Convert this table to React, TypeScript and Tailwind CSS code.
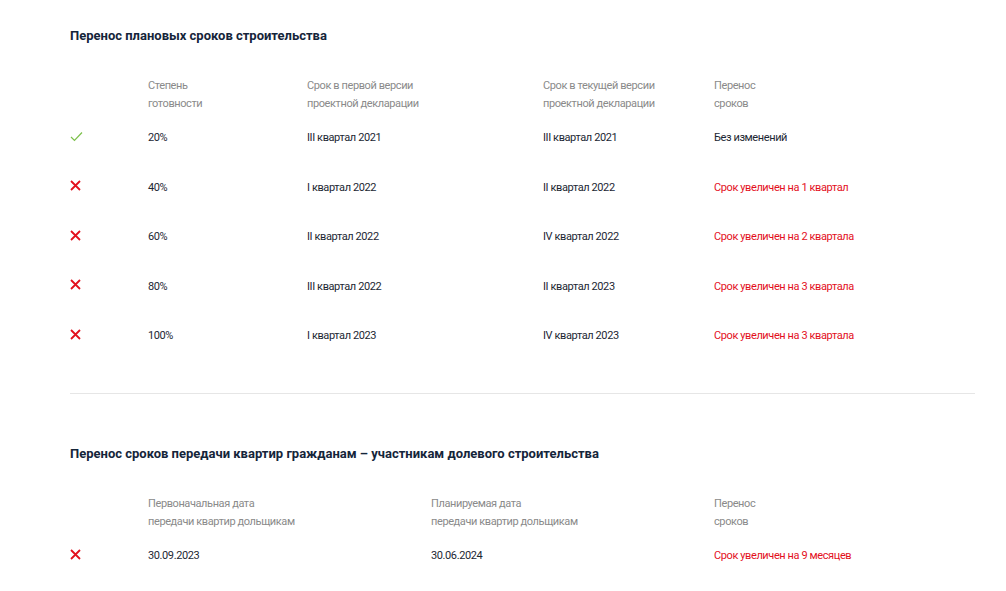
import * as React from 'react';

// ============================================
// Data
// ============================================

type Row = {
  ok: boolean;
  cells: string[];
  result: string;
};

const buildRows: Row[] = [
  { ok: true, cells: ['20%', 'III квартал 2021', 'III квартал 2021'], result: 'Без изменений' },
  { ok: false, cells: ['40%', 'I квартал 2022', 'II квартал 2022'], result: 'Срок увеличен на 1 квартал' },
  { ok: false, cells: ['60%', 'II квартал 2022', 'IV квартал 2022'], result: 'Срок увеличен на 2 квартала' },
  { ok: false, cells: ['80%', 'III квартал 2022', 'II квартал 2023'], result: 'Срок увеличен на 3 квартала' },
  { ok: false, cells: ['100%', 'I квартал 2023', 'IV квартал 2023'], result: 'Срок увеличен на 3 квартала' },
];

// ============================================
// Icons
// ============================================

function CheckIcon() {
  return (
    <svg width="13" height="11" viewBox="0 0 13 11" fill="none">
      <path d="M1 6l3.5 3.5L12 1.5" stroke="#7cc04b" strokeWidth="1.2" />
    </svg>
  );
}

function CrossIcon() {
  return (
    <svg width="11" height="11" viewBox="0 0 11 11" fill="none">
      <path d="M1 1l9 9M10 1l-9 9" stroke="#e3101d" strokeWidth="1.8" />
    </svg>
  );
}

function StatusIcon({ ok }: { ok: boolean }) {
  return (
    <div className="-mt-[2px] flex h-[18px] items-center">{ok ? <CheckIcon /> : <CrossIcon />}</div>
  );
}

// ============================================
// App
// ============================================

export default function App() {
  return (
    <div
      className="min-h-screen bg-white px-[70px] pt-[27px] text-[11px] tracking-[-0.4px] text-[#1c2733]"
      style={{ fontFamily: 'Roboto, "Liberation Sans", sans-serif' }}
    >
      <h2 className="text-[13px] font-bold leading-[18px] tracking-normal text-[#15253a]">
        Перенос плановых сроков строительства
      </h2>

      <div className="mt-[32px] grid grid-cols-[78px_159px_236px_171px_1fr] leading-[18px]">
        <div />
        <div className="text-[#8a8a8a]">Степень<br />готовности</div>
        <div className="text-[#8a8a8a]">Срок в первой версии<br />проектной декларации</div>
        <div className="text-[#8a8a8a]">Срок в текущей версии<br />проектной декларации</div>
        <div className="text-[#8a8a8a]">Перенос<br />сроков</div>
      </div>

      <div className="mt-[16px] flex flex-col gap-[31.5px]">
        {buildRows.map((row, i) => (
          <div key={i} className="grid grid-cols-[78px_159px_236px_171px_1fr] leading-[18px]">
            <StatusIcon ok={row.ok} />
            {row.cells.map((c) => (
              <div key={c}>{c}</div>
            ))}
            <div className={row.ok ? '' : 'text-[#e3101d]'}>{row.result}</div>
          </div>
        ))}
      </div>

      <div className="mr-[-39px] mt-[48px] h-px bg-[#e6e6e6]" />

      <h2 className="mt-[51px] text-[13px] font-bold leading-[18px] tracking-normal text-[#15253a]">
        Перенос сроков передачи квартир гражданам – участникам долевого строительства
      </h2>

      <div className="mt-[32px] grid grid-cols-[78px_283px_283px_1fr] leading-[18px]">
        <div />
        <div className="text-[#8a8a8a]">Первоначальная дата<br />передачи квартир дольщикам</div>
        <div className="text-[#8a8a8a]">Планируемая дата<br />передачи квартир дольщикам</div>
        <div className="text-[#8a8a8a]">Перенос<br />сроков</div>
      </div>

      <div className="mt-[16px] grid grid-cols-[78px_283px_283px_1fr] leading-[18px]">
        <StatusIcon ok={false} />
        <div>30.09.2023</div>
        <div>30.06.2024</div>
        <div className="text-[#e3101d]">Срок увеличен на 9 месяцев</div>
      </div>
    </div>
  );
}
